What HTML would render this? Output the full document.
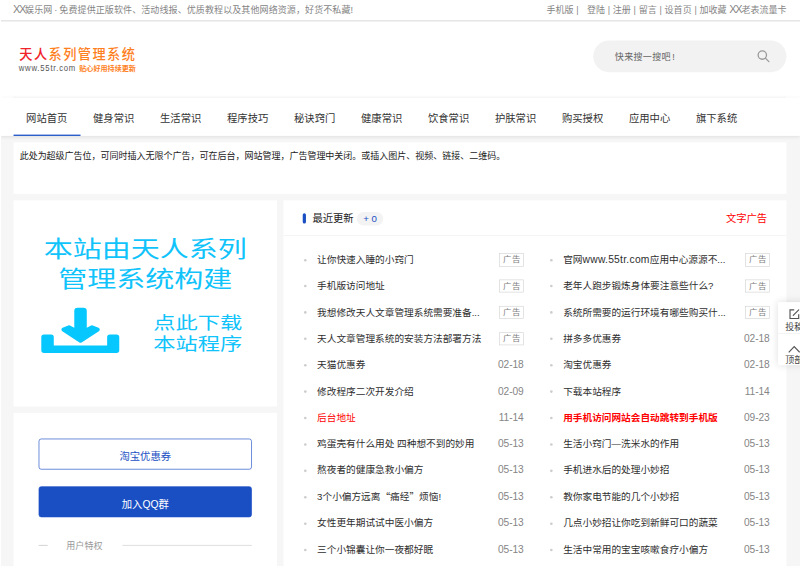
<!DOCTYPE html>
<html lang="zh-CN">
<head>
<meta charset="utf-8">
<title>天人系列管理系统</title>
<style>
*{margin:0;padding:0;box-sizing:border-box}
html,body{width:800px;height:568px;overflow:hidden;background:#f6f6f6}
body{font-family:"Liberation Sans","Noto Sans CJK SC",sans-serif;color:#333}
a{color:inherit;text-decoration:none}
ul{list-style:none}
#page{position:absolute;left:0;top:0;width:1242px;height:882px;transform:scale(0.64412);transform-origin:0 0;background:#f6f6f6;overflow:hidden}
.wrap{width:1200px;margin:0 auto;position:relative}
/* top bar */
.topbar{height:33px;background:#fff;font-size:14px;line-height:30px;color:#858585;word-spacing:.4px}
.topbar .l{float:left;word-spacing:-1px;letter-spacing:.13px}
.topbar .l b{font-weight:400;font-size:17px;letter-spacing:-2px;margin-left:-.8px;line-height:20px}
.topbar .r{float:right}
.topbar .r b{font-weight:400;font-size:17px;letter-spacing:-2px;line-height:20px}
/* header */
.header{height:118px;background:#fff;position:relative}
.header .wrap{height:118px}
.logo{position:absolute;left:9px;top:38.5px;width:300px;height:60px}
.logo .t1{font-size:20.5px;line-height:26px;letter-spacing:2.2px;color:#ff7f1e;font-weight:500;white-space:nowrap}
.logo .t1 b{color:#f0232a;font-weight:500}
.logo .t2{position:absolute;left:-1px;top:25px;font-size:15px;line-height:18px;color:#555;letter-spacing:1.5px;white-space:nowrap;transform:scaleX(.8);transform-origin:0 0}
.logo .t3{position:absolute;left:93px;top:28px;font-size:11px;line-height:14px;color:#ff7f1e;font-weight:700;white-space:nowrap}
.search{position:absolute;right:0;top:29.5px;width:300px;height:49.5px;border-radius:25px;background:#f2f2f2}
.search .ph{position:absolute;left:33.5px;top:0;line-height:50px;font-size:14px;color:#666;letter-spacing:.5px}
.search .ph i{font-style:normal;margin-left:2px}
.search svg{position:absolute;right:26px;top:14px}
/* nav */
.nav{height:60px;background:#fff;box-shadow:0 2px 6px rgba(0,0,0,.1);position:relative}
.nav ul{height:60px}
.nav li{float:left;width:104px;height:60px;line-height:67.6px;text-indent:-1px;text-align:center;font-size:16px;color:#333;position:relative}
.nav li.on:after{content:"";position:absolute;left:0;right:0;bottom:0;height:2.2px;background:#1a4fc4}
/* ad */
.ad{margin-top:10px;height:80px;background:#fff;padding:11px 9.5px 10px;font-size:14px;line-height:20px;color:#222;letter-spacing:-.04px}
/* main */
.main{margin-top:10px;height:600px}
.left{float:left;width:409px}
.right{float:right;width:781px;background:#fff;height:600px}
.pic{height:320px;background:#fff;position:relative;color:#10c3fb;overflow:hidden}
.box2{margin-top:10px;background:#fff;height:300px;padding:39.5px 39px 0}

.pic .h1{position:absolute;left:0;right:0;top:52.7px;text-align:center;font-size:34.4px;line-height:46.2px;font-weight:400;transform:scaleX(1.31);white-space:nowrap}
.pic .h2{position:absolute;left:217px;top:172.5px;font-size:27px;line-height:34.7px;font-weight:400;transform:scaleX(1.28);transform-origin:0 0;white-space:nowrap}
.pic svg{position:absolute;left:25.57px;top:146px}
.btn{display:block;height:48px;line-height:53px;overflow:hidden;text-align:center;font-size:16px;border-radius:4px;border:1px solid #1a4fc4;color:#1a4fc4;background:#fff;margin-bottom:26px}
.btn.b{background:#1a4fc4;color:#fff}
.tq{position:relative;height:20px;line-height:20px;font-size:14px;color:#999;margin-top:34px}
.tq i{position:absolute;left:0;top:9px;width:14px;height:1px;background:#bbb}
.tq span{position:absolute;left:43px;top:0}
.tq em{position:absolute;left:130px;right:0;top:9px;height:1px;background:#ccc}
.rh{height:55px;border-bottom:1px solid #f0f0f0;position:relative}
.rh .bar{position:absolute;left:30.3px;top:20px;width:5px;height:16px;border-radius:3px;background:#1a4fc4}
.rh .tt{position:absolute;left:45px;top:2px;line-height:54px;font-size:16px;color:#222}
.rh .bd{position:absolute;left:114px;top:18px;height:21px;width:41px;border-radius:10.5px;background:#f3f3f3;color:#1a4fc4;font-size:15px;line-height:21px;text-align:center}
.rh .more{position:absolute;right:30px;top:1px;line-height:54px;font-size:16px;color:#f00}
.list{padding:17px 0 0 31.3px;overflow:hidden;width:782px}
.list li{float:left;width:341.7px;height:40.93px;line-height:40.93px;font-size:15px;color:#2e2e2e;position:relative;padding-left:21px;white-space:nowrap}
.list li:nth-child(odd){margin-right:40.3px}
.list li:before{content:"";position:absolute;left:.5px;top:18.5px;width:4px;height:4px;border-radius:2px;background:#ccc}
.list li .d{position:absolute;right:0;top:0;color:#858585;font-size:15.8px;letter-spacing:-.1px;font-weight:400}
.list li .q{font-family:"Noto Sans CJK SC",sans-serif}
.list li .g{position:absolute;right:0;top:10px;height:20.5px;line-height:18.5px;width:37.5px;border:1px solid #d4d4d4;color:#808080;font-size:13px;text-align:center;letter-spacing:1px;padding-left:1px}
.list li .en{font-style:normal;font-size:16px;letter-spacing:.4px}
.list li.red{color:#f00}
.list li.redb{color:#f00;font-weight:700}
.side{position:absolute;left:1208px;top:469px;width:50px;background:#fff;box-shadow:0 0 12px rgba(0,0,0,.13);font-size:14px;color:#444;text-align:center}
.side .c{height:49px;position:relative;border-bottom:1px solid #eee}
.side .c svg{position:absolute;left:16px;top:10px}
.side .c span{position:absolute;left:0;right:0;top:28px;line-height:20px}
.side .c2 svg{top:17.5px;left:15px}
.side .c2 span{top:29.5px}
.hl{position:absolute;height:1px;left:0;width:800px}
</style>
</head>
<body>
<div id="page">
  <div class="topbar"><div class="wrap">
    <div class="l"><b>XX</b>娱乐网 · 免费提供正版软件、活动线报、优质教程以及其他网络资源，好货不私藏!</div>
    <div class="r">手机版 |&nbsp;&nbsp; 登陆 | 注册 | 留言 | 设首页 | 加收藏 <b>XX</b>老表流量卡</div>
  </div></div>
  <div class="header"><div class="wrap">
    <div class="logo">
      <div class="t1"><b>天人</b>系列管理系统</div>
      <div class="t2">www.55tr.com</div><div class="t3">贴心好用持续更新</div>
    </div>
    <div class="search"><span class="ph">快来搜一搜吧<i>!</i></span>
      <svg width="20" height="20" viewBox="0 0 20 20" fill="none" stroke="#999" stroke-width="2"><circle cx="8.5" cy="8.5" r="6.5"/><path d="M13.3 13.3L19 19" stroke-linecap="round"/></svg>
    </div>
  </div></div>
  <div class="nav"><div class="wrap"><ul>
    <li class="on">网站首页</li><li>健身常识</li><li>生活常识</li><li>程序技巧</li><li>秘诀窍门</li><li>健康常识</li><li>饮食常识</li><li>护肤常识</li><li>购买授权</li><li>应用中心</li><li>旗下系统</li>
  </ul></div></div>
  <div class="wrap">
    <div class="ad">此处为超级广告位，可同时插入无限个广告，可在后台，网站管理，广告管理中关闭。或插入图片、视频、链接、二维码。</div>
    <div class="main">
      <div class="left">
        <div class="pic">
          <div class="h1">本站由天人系列<br>管理系统构建</div>
          <svg width="155.25" height="110.2" viewBox="0 0 800 568"><g fill="#06c7fe" stroke="#06c7fe"><rect x="352" y="108" width="100" height="200" rx="26" stroke="none"/><path d="M265 282L310 264L402 312L494 264L540 282L402 371z" stroke-width="32" stroke-linejoin="round"/><path stroke="none" d="M110 322H166a22 22 0 0 1 22 22V410H615V344a22 22 0 0 1 22-22H690a22 22 0 0 1 22 22V448a22 22 0 0 1-22 22H110a22 22 0 0 1-22-22V344a22 22 0 0 1 22-22z"/></g></svg>
          <div class="h2">点此下载<br>本站程序</div>
        </div>
        <div class="box2">
          <a class="btn">淘宝优惠券</a>
          <a class="btn b">加入QQ群</a>
          <div class="tq"><i></i><span>用户特权</span><em></em></div>
        </div>
      </div>
      <div class="right">
        <div class="rh"><i class="bar"></i><span class="tt">最近更新</span><span class="bd">+ 0</span><span class="more">文字广告</span></div>
        <ul class="list">
          <li>让你快速入睡的小窍门<span class="g">广告</span></li>
          <li>官网<i class="en">www.55tr.com</i>应用中心源源不...<span class="g">广告</span></li>
          <li>手机版访问地址<span class="g">广告</span></li>
          <li>老年人跑步锻炼身体要注意些什么?<span class="g">广告</span></li>
          <li>我想修改天人文章管理系统需要准备...<span class="g">广告</span></li>
          <li>系统所需要的运行环境有哪些购买什...<span class="g">广告</span></li>
          <li>天人文章管理系统的安装方法部署方法<span class="g">广告</span></li>
          <li>拼多多优惠券<span class="d">02-18</span></li>
          <li>天猫优惠券<span class="d">02-18</span></li>
          <li>淘宝优惠券<span class="d">02-18</span></li>
          <li>修改程序二次开发介绍<span class="d">02-09</span></li>
          <li>下载本站程序<span class="d">11-14</span></li>
          <li class="red">后台地址<span class="d">11-14</span></li>
          <li class="redb">用手机访问网站会自动跳转到手机版<span class="d">09-23</span></li>
          <li>鸡蛋壳有什么用处 四种想不到的妙用<span class="d">05-13</span></li>
          <li>生活小窍门—洗米水的作用<span class="d">05-13</span></li>
          <li>熬夜者的健康急救小偏方<span class="d">05-13</span></li>
          <li>手机进水后的处理小妙招<span class="d">05-13</span></li>
          <li>3个小偏方远离<span class="q">“</span>痛经<span class="q">”</span>烦恼!<span class="d">05-13</span></li>
          <li>教你家电节能的几个小妙招<span class="d">05-13</span></li>
          <li>女性更年期试试中医小偏方<span class="d">05-13</span></li>
          <li>几点小妙招让你吃到新鲜可口的蔬菜<span class="d">05-13</span></li>
          <li>三个小锦囊让你一夜都好眠<span class="d">05-13</span></li>
          <li>生活中常用的宝宝咳嗽食疗小偏方<span class="d">05-13</span></li>
        </ul>
      </div>
    </div>
  </div>
  <div class="side">
    <div class="c"><svg width="18" height="18" viewBox="0 0 18 18" fill="none" stroke="#555" stroke-width="1.8"><path d="M9 2H2.5v13.5H16V9"/><path d="M7.5 10.5L16 2" stroke-linecap="round"/></svg><span>投稿</span></div>
    <div class="c c2" style="border-bottom:0;height:49px"><svg width="20" height="12" viewBox="0 0 20 12" fill="none" stroke="#555" stroke-width="1.8"><path d="M1.5 11L10 2l8.5 9"/></svg><span>顶部</span></div>
  </div>
</div>
<div class="hl" style="top:20px;background:#e6e6e6"></div>
<div class="hl" style="top:21px;background:#f2f2f2"></div>
<div class="hl" style="top:96px;left:13px;width:773px;background:#f9f9f9"></div>
<div class="hl" style="top:97px;left:13px;width:773px;background:#f6f6f6"></div>
<div style="position:absolute;left:0;top:0;width:1px;height:568px;background:#fff"></div>
<div style="position:absolute;left:0;top:566px;width:800px;height:2px;background:rgba(255,255,255,.85)"></div>
</body>
</html>
